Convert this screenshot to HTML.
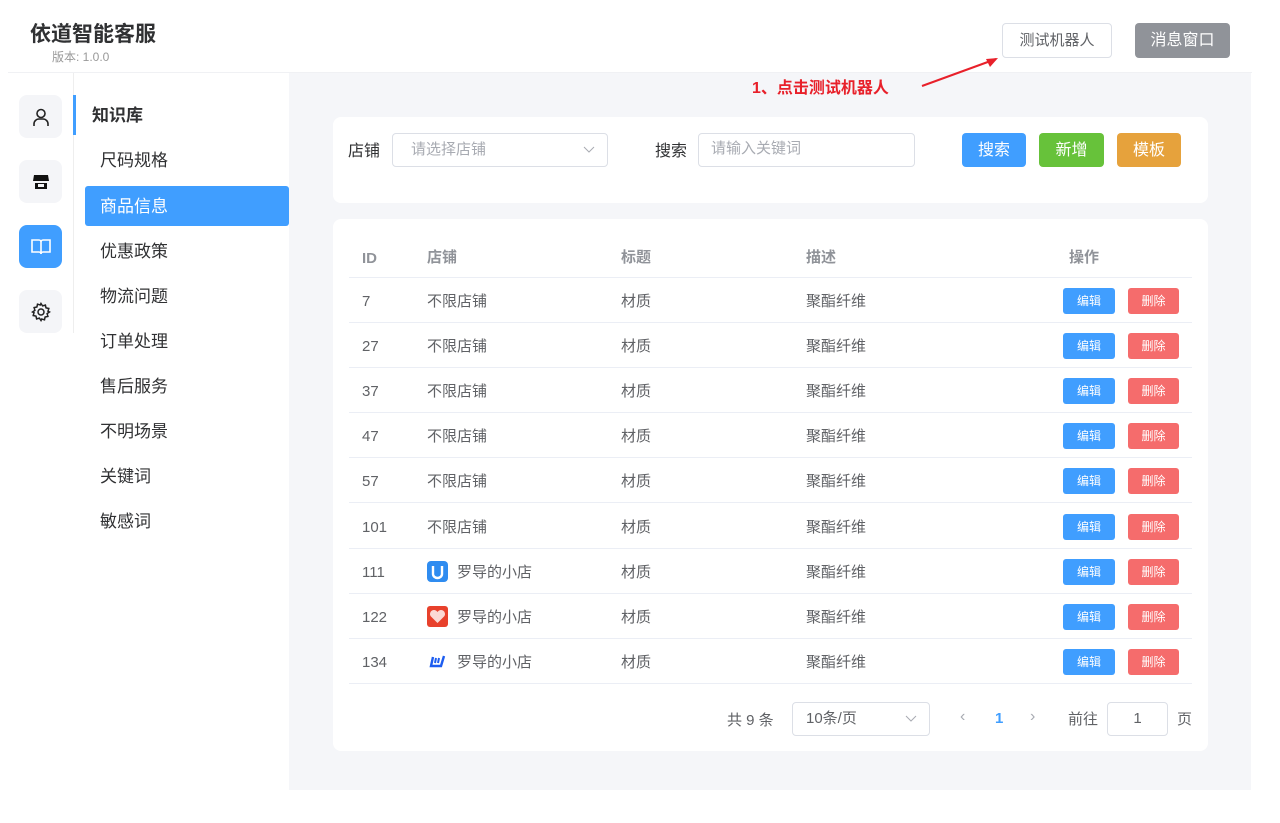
<!DOCTYPE html>
<html><head><meta charset="utf-8"><style>
*{box-sizing:border-box;margin:0;padding:0}
body{width:1280px;height:823px;background:#fff;font-family:"Liberation Sans","Noto Sans CJK SC",sans-serif;position:relative;overflow:hidden;color:#606266}
.a{position:absolute}
.btn{position:absolute;border-radius:4px;text-align:center;color:#fff;font-size:16px}
.ib{position:absolute;left:19px;width:43px;height:43px;border-radius:8px;background:#f4f5f8;display:flex;align-items:center;justify-content:center}
.mi{position:absolute;left:100px;font-size:17px;color:#303133}
.card{position:absolute;background:#fff;border-radius:8px}
.inp{position:absolute;border:1px solid #dcdfe6;border-radius:4px;background:#fff;font-size:15px;color:#a8abb2;padding-left:18px}
.row{position:absolute;left:16px;width:843px;height:45px;border-bottom:1px solid #ebeef5;font-size:15px;color:#606266}
.row span{position:absolute;top:12px}
.row span.n{top:15px}
.e{position:absolute;top:10px;width:52px;height:26px;border-radius:3px;color:#fff;font-size:12px;line-height:27px;text-align:center}
</style></head><body>
<div class="a" style="left:30px;top:18px;font-size:21px;font-weight:bold;color:#303133">依道智能客服</div>
<div class="a" style="left:52px;top:48px;font-size:12px;color:#999">版本: 1.0.0</div>
<div class="a" style="left:1002px;top:23px;width:110px;height:35px;border:1px solid #dcdfe6;border-radius:4px;font-size:15px;line-height:33px;text-align:center;color:#606266">测试机器人</div>
<div class="btn" style="left:1135px;top:23px;width:95px;height:35px;background:#909399;line-height:35px">消息窗口</div>
<div class="a" style="left:8px;top:72px;width:1244px;height:1px;background:#f0f1f4"></div>
<div class="a" style="left:73px;top:73px;width:1px;height:260px;background:#eee"></div>
<div class="a" style="left:73px;top:95px;width:3px;height:40px;background:#409eff"></div>
<div class="ib" style="top:95px"><svg width="20" height="20" fill="none" stroke="#222" stroke-width="1.6"><circle cx="10" cy="6.5" r="4"/><path d="M3 19v-2a5 5 0 0 1 5-5h4a5 5 0 0 1 5 5v2"/></svg></div>
<div class="ib" style="top:160px"><svg width="20" height="20"><path d="M3 3h14l1 6H2z" fill="#111"/><rect x="4" y="11" width="12" height="6" fill="#111"/><rect x="7" y="12" width="6" height="3" fill="#f4f5f8"/></svg></div>
<div class="ib" style="top:225px;background:#409eff"><svg width="22" height="20" fill="none" stroke="#fff" stroke-width="1.6"><path d="M2 3h7a2 2 0 0 1 2 2v12a2 2 0 0 0-2-2H2zM20 3h-7a2 2 0 0 0-2 2v12a2 2 0 0 1 2-2h7z"/></svg></div>
<div class="ib" style="top:290px"><svg width="20" height="20" fill="none" stroke="#222" stroke-width="1.5"><circle cx="10" cy="10" r="3"/><path d="M10 1.5l1.6 2.4 2.8-.8.6 2.8 2.8.6-.8 2.8L18.5 10l-2.4 1.6.8 2.8-2.8.6-.6 2.8-2.8-.8L10 18.5l-1.6-2.4-2.8.8-.6-2.8-2.8-.6.8-2.8L1.5 10l2.4-1.6-.8-2.8 2.8-.6.6-2.8 2.8.8z"/></svg></div>
<div class="a" style="left:92px;top:101px;font-size:17px;font-weight:bold;color:#303133">知识库</div>
<div class="mi" style="top:146px">尺码规格</div>
<div class="a" style="left:85px;top:186px;width:204px;height:40px;background:#409eff;border-radius:3px"></div>
<div class="mi" style="top:192px;color:#fff">商品信息</div>
<div class="mi" style="top:237px">优惠政策</div>
<div class="mi" style="top:282px">物流问题</div>
<div class="mi" style="top:327px">订单处理</div>
<div class="mi" style="top:372px">售后服务</div>
<div class="mi" style="top:417px">不明场景</div>
<div class="mi" style="top:462px">关键词</div>
<div class="mi" style="top:507px">敏感词</div>
<div class="a" style="left:289px;top:73px;width:962px;height:717px;background:#f5f6f9"></div>
<div class="a" style="left:752px;top:74px;font-size:16px;font-weight:bold;color:#e8202a">1、点击测试机器人</div>
<svg class="a" style="left:920px;top:55px" width="80" height="35"><line x1="2" y1="31" x2="76" y2="4" stroke="#e8202a" stroke-width="2"/><path d="M78 3 L66 4 L70 12 Z" fill="#e8202a"/></svg>
<div class="card" style="left:333px;top:117px;width:875px;height:86px">
<div class="a" style="left:15px;top:20px;font-size:16px;color:#303133">店铺</div>
<div class="inp" style="left:59px;top:16px;width:216px;height:34px;line-height:32px">请选择店铺<svg class="a" style="right:12px;top:12px" width="12" height="8" fill="none" stroke="#a8abb2"><path d="M1 1l5 5 5-5"/></svg></div>
<div class="a" style="left:322px;top:20px;font-size:16px;color:#303133">搜索</div>
<div class="inp" style="left:365px;top:16px;width:217px;height:34px;line-height:30px;padding-left:12px">请输入关键词</div>
<div class="btn" style="left:629px;top:16px;width:64px;height:34px;line-height:36px;background:#409eff">搜索</div>
<div class="btn" style="left:706px;top:16px;width:65px;height:34px;line-height:36px;background:#67c23a">新增</div>
<div class="btn" style="left:784px;top:16px;width:64px;height:34px;line-height:36px;background:#e6a23c">模板</div>
</div>
<div class="card" style="left:333px;top:219px;width:875px;height:532px">
<div class="row" style="top:14px;font-weight:bold;color:#909399"><span class="n" style="left:13px;top:17px">ID</span><span style="left:78px;top:13px">店铺</span><span style="left:272px;top:13px">标题</span><span style="left:457px;top:13px">描述</span><span style="left:720px;top:13px">操作</span></div>
<div id="rows"></div>
<div class="a" style="left:394px;top:490px;font-size:15px">共 9 条</div>
<div class="inp" style="left:459px;top:483px;width:138px;height:34px;line-height:32px;padding-left:13px;color:#606266">10条/页<svg class="a" style="right:12px;top:12px" width="12" height="8" fill="none" stroke="#a8abb2"><path d="M1 1l5 5 5-5"/></svg></div>
<div class="a" style="left:627px;top:489px;font-size:16px;color:#a8abb2">&lsaquo;</div>
<div class="a" style="left:662px;top:491px;font-size:15px;font-weight:bold;color:#409eff">1</div>
<div class="a" style="left:697px;top:489px;font-size:16px;color:#a8abb2">&rsaquo;</div>
<div class="a" style="left:735px;top:489px;font-size:15px">前往</div>
<div class="inp" style="left:774px;top:483px;width:61px;height:34px;line-height:32px;padding:0;text-align:center;color:#606266">1</div>
<div class="a" style="left:844px;top:489px;font-size:15px">页</div>
</div>
<script>
var d=[["7",0],["27",0],["37",0],["47",0],["57",0],["101",0],["111",1],["122",2],["134",3]],h="";
var ic=['','<svg class="a" style="left:78px;top:12px" width="21" height="21"><rect width="21" height="21" rx="4" fill="#2f8cf0"/><path d="M6 5v8a4.5 4 0 0 0 9 0V5" fill="none" stroke="#fff" stroke-width="2.4"/></svg>','<svg class="a" style="left:78px;top:12px" width="21" height="21"><rect width="21" height="21" rx="3" fill="#e8412c"/><path d="M10.5 17L3.5 10a3.5 3.5 0 0 1 7-4 3.5 3.5 0 0 1 7 4z" fill="#fff" opacity=".8"/></svg>','<svg class="a" style="left:78px;top:12px" width="21" height="21"><path d="M6 6l-2 9h10l3-10" fill="none" stroke="#1d5df0" stroke-width="2.4"/><path d="M9 7l-1 5M12 7l-1 5" stroke="#1d5df0" stroke-width="2"/></svg>'];
d.forEach(function(r,i){h+='<div class="row" style="top:'+(59+i*45.1)+'px"><span class="n" style="left:13px">'+r[0]+'</span>'+(r[1]?ic[r[1]]+'<span style="left:108px">罗导的小店</span>':'<span style="left:78px">不限店铺</span>')+'<span style="left:272px">材质</span><span style="left:457px">聚酯纤维</span><div class="e" style="left:714px;background:#409eff">编辑</div><div class="e" style="left:779px;width:51px;background:#f56c6c">删除</div></div>'});
document.getElementById('rows').innerHTML=h;
</script>
</body></html>
